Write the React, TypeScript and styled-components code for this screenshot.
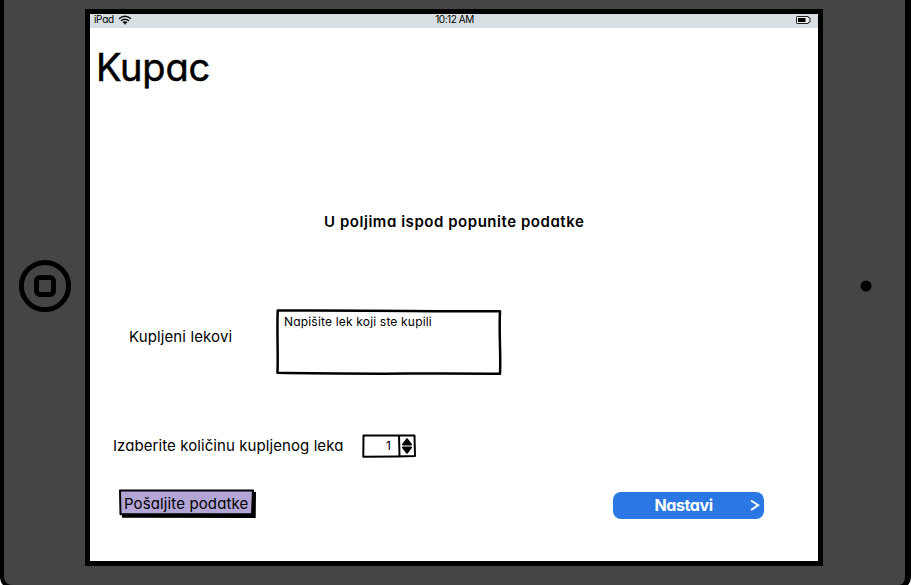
import React from "react";
import styled, { createGlobalStyle } from "styled-components";

const GlobalStyle = createGlobalStyle`
  * { box-sizing: border-box; }
  body { margin: 0; background: #fff; overflow: hidden; }
`;

const Device = styled.div`
  display: grid;
  grid-template-columns: 81px 738px 1fr;
  width: 911px;
  height: 589px;
  padding-top: 9px;
  border: solid #000;
  border-width: 0 6px 4px 4px;
  border-radius: 0 0 12px 12px;
  background: #454545;
  color: #000;
  font-family: Inter, "Open Sans", sans-serif;
  font-feature-settings: "cv11";
`;

const Bezel = styled.div<{ $pad: string }>`
  padding: ${(p) => p.$pad};
`;

const Screen = styled.main`
  height: 557px;
  border: 5px solid #000;
  background: #fff;
  display: flex;
  flex-direction: column;
`;

const StatusBar = styled.header`
  display: grid;
  grid-template-columns: 1fr auto 1fr;
  height: 14px;
  padding: 0 7px 0 4px;
  background: #d7dfe2;
  line-height: 11px;
`;

const StatusGroup = styled.div<{ $end?: boolean }>`
  display: flex;
  gap: 4px;
  justify-content: ${(p) => (p.$end ? "flex-end" : "flex-start")};
`;

const Label = styled.span<{ $size: number; $track?: number; $weight?: number }>`
  font-size: ${(p) => p.$size}px;
  letter-spacing: ${(p) => p.$track ?? 0}px;
  font-weight: ${(p) => p.$weight ?? 400};
  white-space: nowrap;
`;

const Clock = styled(Label)`
  padding-left: 4px;
`;

const Title = styled.h1`
  margin: 17px 0 0 6px;
  font-size: 38px;
  font-weight: 400;
  line-height: 44px;
  letter-spacing: -0.2px;
  -webkit-text-stroke: 0.5px #000;
`;

const Instruction = styled.h2`
  margin: 122px 0 0 234px;
  font-size: 15px;
  font-weight: 600;
  line-height: 22px;
  letter-spacing: 0.54px;
`;

const FieldRow = styled.div<{ $top: number; $left: number; $height: number }>`
  display: flex;
  align-items: center;
  height: ${(p) => p.$height}px;
  margin: ${(p) => p.$top}px 0 0 ${(p) => p.$left}px;
`;

const FieldName = styled.div<{ $width: number; $lift: number }>`
  width: ${(p) => p.$width}px;
  padding-bottom: ${(p) => p.$lift}px;
  line-height: 20px;
`;

const Sketch = styled.svg`
  position: absolute;
  inset: 0;
  pointer-events: none;
`;

const TextBox = styled.div`
  position: relative;
  width: 226px;
  height: 66px;
  padding: 3px 8px;
  line-height: 16px;
`;

const Stepper = styled.div`
  position: relative;
  width: 54px;
  height: 24px;
  padding: 1px 0 0 24px;
  line-height: 18px;
`;

const Actions = styled.div`
  display: flex;
  justify-content: space-between;
  margin: 31px 54px 0 28px;
`;

const SendButton = styled.button`
  position: relative;
  width: 139px;
  height: 30px;
  padding: 0 0 2px 6px;
  border: 0;
  background: none;
  color: #000;
  font: inherit;
  font-feature-settings: inherit;
  text-align: left;
`;

const ButtonText = styled(Label)`
  position: relative;
`;

const NextButton = styled.button`
  display: grid;
  grid-template-columns: 1fr 10px;
  align-items: center;
  width: 151px;
  height: 27px;
  margin-top: 3px;
  padding: 0 4px 2px 4px;
  border: 0;
  border-radius: 8px;
  background: #2b78e4;
  color: #fff;
  font: inherit;
  font-feature-settings: inherit;
  text-align: center;
`;

const WifiIcon = () => (
  <svg width="14" height="12" viewBox="0 0 14 12" fill="none" stroke="#000" strokeWidth="1.4">
    <path d="M1 4.7Q7-0.1 13 4.7M3 6.9Q7 3.7 11 6.9M5 8.8Q7 7.3 9 8.8" />
    <path d="M5.8 9.4Q7 8.5 8.2 9.4L7 10.8Z" fill="#000" stroke="none" />
  </svg>
);

const BatteryIcon = () => (
  <svg width="15" height="12" viewBox="0 0 15 12">
    <path d="M1.2 2.5H12Q12.6 2.5 12.8 4H14V8H12.8Q12.6 9.5 12 9.5H1.2Q.5 9.5.5 8.8V3.2Q.5 2.5 1.2 2.5Z" fill="#e8edef" stroke="#222" />
    <rect x="2" y="4" width="7.5" height="4" fill="#000" />
  </svg>
);

const HomeIcon = () => (
  <svg width="54" height="54" viewBox="0 0 54 54" fill="none" stroke="#000" display="block">
    <circle cx="27" cy="27" r="23.6" strokeWidth="5" />
    <rect x="18.5" y="18.5" width="17" height="17" rx="3.5" strokeWidth="5" />
  </svg>
);

const CameraIcon = () => (
  <svg width="12" height="12" display="block">
    <circle cx="6" cy="6" r="5.5" />
  </svg>
);

export default function App() {
  return (
    <>
      <GlobalStyle />
      <Device>
        <Bezel $pad="250px 0 0 14px">
          <HomeIcon />
        </Bezel>
        <Screen>
          <StatusBar>
            <StatusGroup>
              <Label $size={10} $track={-0.3}>iPad</Label>
              <WifiIcon />
            </StatusGroup>
            <Clock $size={10} $track={-0.45}>10:12 AM</Clock>
            <StatusGroup $end>
              <BatteryIcon />
            </StatusGroup>
          </StatusBar>
          <Title>Kupac</Title>
          <Instruction>U poljima ispod popunite podatke</Instruction>
          <FieldRow $top={76} $left={39} $height={66}>
            <FieldName $width={147} $lift={12}>
              <Label $size={15} $track={0.12}>Kupljeni lekovi</Label>
            </FieldName>
            <TextBox>
              <Sketch width="226" height="66" fill="none" stroke="#000" strokeWidth="2.5" strokeLinejoin="round">
                <path d="M1.7 1.6C70 1 165 2.5 224 2.3C222.8 24 225 45 224 64.8C150 64 82 65.5 1.5 63.8C2.2 44 .9 24 1.7 1.6Z" />
              </Sketch>
              <Label $size={12} $track={0.18}>Napišite lek koji ste kupili</Label>
            </TextBox>
          </FieldRow>
          <FieldRow $top={59} $left={23} $height={24}>
            <FieldName $width={249} $lift={2}>
              <Label $size={15} $track={0.08}>Izaberite količinu kupljenog leka</Label>
            </FieldName>
            <Stepper>
              <Sketch width="54" height="24" fill="none" stroke="#000" strokeWidth="2" strokeLinejoin="round">
                <path d="M1.5 1.6L52.5 1.4L53 22L35 22.5L1.3 22.8ZM37 1.2L37.5 22.6" />
                <path d="M45 5L49.2 10.6H40.8ZM40.8 13.4H49.2L45 19Z" fill="#000" strokeWidth="1.6" />
              </Sketch>
              <Label $size={12}>1</Label>
            </Stepper>
          </FieldRow>
          <Actions>
            <SendButton>
              <Sketch width="139" height="30" strokeLinejoin="round">
                <path d="M4 4L136 2.8L138 3L137.7 29L4 28.8Z" fill="#000" />
                <path d="M2 1.6L70 1.4L135 1.5L134 25L2.5 25.2Z" fill="#b3a5d6" stroke="#000" strokeWidth="2" />
              </Sketch>
              <ButtonText $size={15} $track={0.12}>Pošaljite podatke</ButtonText>
            </SendButton>
            <NextButton>
              <Label $size={16} $weight={700} $track={-0.4}>Nastavi</Label>
              <svg width="10" height="12" viewBox="0 0 10 12" fill="none" stroke="#fff" strokeWidth="2">
                <path d="M1 1.5L8.2 6.2L1 11" />
              </svg>
            </NextButton>
          </Actions>
        </Screen>
        <Bezel $pad="271px 0 0 37px">
          <CameraIcon />
        </Bezel>
      </Device>
    </>
  );
}
